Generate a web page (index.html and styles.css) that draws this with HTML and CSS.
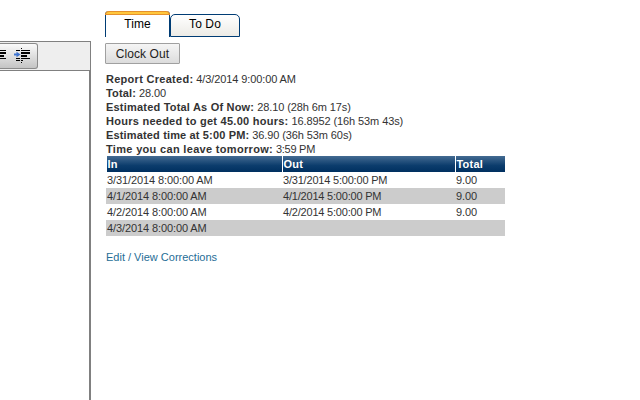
FILE: index.html
```
<!DOCTYPE html>
<html lang="en">
<head>
<meta charset="utf-8">
<title>Time</title>
<link rel="stylesheet" href="styles.css">
</head>
<body>
<div class="page">
  <section class="editor">
    <div class="toolbar">
      <div class="tool-group">
        <svg width="36" height="24" viewBox="0 0 36 24" shape-rendering="crispEdges">
          <path d="M0 6h6v1H0zM0 8h6v2H0zM0 11h4v2H0zM0 14h6v1H0z" fill="#000"/>
          <path d="M16 6h4v1h-4zM21 4h1v1h-1zM21 6h9v1h-9zM21 8h9v2h-9zM21 11h6v2h-6zM21 14h9v1h-9zM16 14h4v1h-4zM16 16h4v1h-4zM21 16h2v1h-2zM21 18h1v1h-1z" fill="#000"/>
          <path d="M14 9.5h2.5V7.7l4 2.8-4 2.8v-1.8H14z" fill="#3d73d0" shape-rendering="auto"/>
        </svg>
      </div>
    </div>
    <div class="edit-area"></div>
  </section>
  <main class="panel">
    <nav class="tabs">
      <a class="tab active"><span>Time</span></a>
      <a class="tab todo"><span>To Do</span></a>
    </nav>
    <button class="clock" type="button">Clock Out</button>
    <div class="report">
      <div><b class="l1">Report Created:</b> 4/3/2014 9:00:00 AM</div>
      <div><b class="l2">Total:</b> 28.00</div>
      <div><b class="l3">Estimated Total As Of Now:</b> 28.10 (28h 6m 17s)</div>
      <div><b class="l4">Hours needed to get 45.00 hours:</b> 16.8952 (16h 53m 43s)</div>
      <div><b class="l5">Estimated time at 5:00 PM:</b> 36.90 (36h 53m 60s)</div>
      <div class="leave"><b class="l6">Time you can leave tomorrow:</b> 3:59 PM</div>
    </div>
    <div class="table">
      <div class="row head"><span>In</span><span>Out</span><span>Total</span></div>
      <div class="row"><span>3/31/2014 8:00:00 AM</span><span class="out">3/31/2014 5:00:00 PM</span><span>9.00</span></div>
      <div class="row alt"><span>4/1/2014 8:00:00 AM</span><span class="out">4/1/2014 5:00:00 PM</span><span>9.00</span></div>
      <div class="row"><span>4/2/2014 8:00:00 AM</span><span class="out">4/2/2014 5:00:00 PM</span><span>9.00</span></div>
      <div class="row alt"><span>4/3/2014 8:00:00 AM</span><span></span><span></span></div>
    </div>
    <a class="link">Edit / View Corrections</a>
  </main>
</div>
</body>
</html>
```
FILE: styles.css
```
* { box-sizing: border-box; }
body {
  margin: 0;
  background: #fff;
  color: #333;
  font: 11px/14px "Liberation Sans", Arial, sans-serif;
  letter-spacing: -0.1px;
}
.page { display: flex; width: 640px; height: 400px; overflow: hidden; }
.editor {
  width: 91px;
  height: 359px;
  margin-top: 41px;
  display: flex;
  flex-direction: column;
}
.toolbar {
  height: 30px;
  padding-top: 1px;
  background: #eee;
  border: solid #808080;
  border-width: 1px 1px 1px 0;
}
.tool-group {
  width: 38px;
  height: 26px;
  border: 1px solid #8a8a8a;
  border-left: 0;
  border-radius: 0 3px 3px 0;
  background: linear-gradient(#fafafa, #c4c4c4);
}
.tool-group svg { display: block; }
.edit-area { flex: 1; border-right: 2px solid #808080; }
.panel { width: 400px; margin-left: 14px; padding-top: 11px; }
.tabs { display: flex; height: 26px; }
.tab {
  text-align: center;
  color: #000;
  font-size: 12px;
  letter-spacing: 0.1px;
  border: 1px solid #003c74;
}
.active {
  position: relative;
  width: 65px;
  border-top: 0;
  border-bottom: 0;
  border-radius: 4px 4px 0 0;
  background: #fff;
  line-height: 26px;
}
.active::before {
  content: "";
  position: absolute;
  box-sizing: border-box;
  top: 0;
  left: -1px;
  right: -1px;
  height: 4px;
  border: 1px solid #e5912d;
  border-radius: 4px 4px 0 0;
  background: #ffc73c;
}
.todo {
  width: 70px;
  height: 23px;
  margin-top: 3px;
  border-radius: 5px 5px 0 0;
  background: linear-gradient(#fff, #ecebe6);
  line-height: 19px;
}
.clock {
  display: block;
  width: 75px;
  height: 21px;
  margin: 6px 0 0;
  padding: 0;
  border: 1px solid #a0a0a0;
  border-radius: 1px;
  background: linear-gradient(#f5f5f5, #dcdcdc);
  color: #222;
  font: 12px/18px "Liberation Sans", Arial, sans-serif;
  letter-spacing: 0.08px;
}
.report { margin: 8px 0 0 1px; white-space: nowrap; }
.l1 { letter-spacing: 0.28px; }
.l2 { letter-spacing: 0.15px; }
.l3 { letter-spacing: 0.2px; }
.l4 { letter-spacing: 0.26px; }
.l5 { letter-spacing: 0.15px; }
.l6 { letter-spacing: 0.32px; }
.leave { letter-spacing: -0.25px; }
.table { margin-left: 1px; width: 399px; }
.row {
  display: grid;
  grid-template-columns: 176px 173px 50px;
  height: 16px;
  line-height: 16px;
}
.row span { padding-left: 1px; }
.row .out { letter-spacing: -0.2px; }
.alt { background: #ccc; }
.head span {
  padding-left: 0.5px;
  color: #fff;
  font-weight: bold;
  letter-spacing: 0.2px;
  background: linear-gradient(#446b92, #0b3c6c 60%, #003060);
  border-left: 1px solid #fff;
}
.link { display: block; margin: 14px 0 0 1px; color: #1f6d96; letter-spacing: 0; }
```
